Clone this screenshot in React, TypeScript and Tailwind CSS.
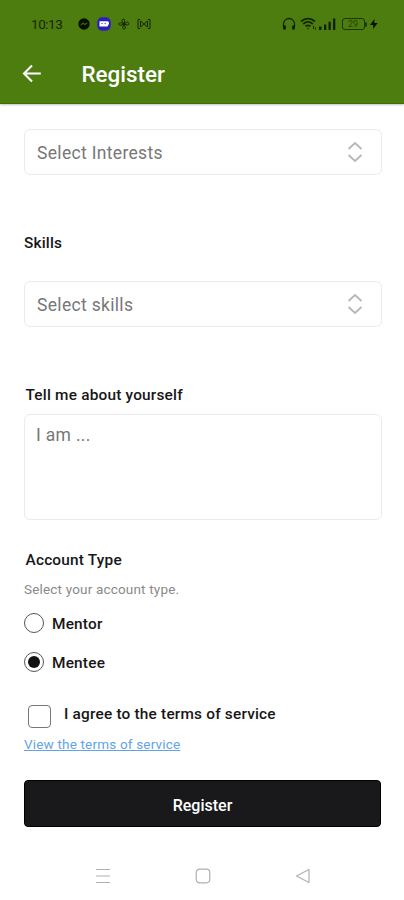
import React from "react";

const StatusBar = () => {
  return (
    <div className="flex h-12 items-center justify-between pl-[31px] pr-[26px] text-[#142800]">
      <div className="flex items-center">
        <span className="w-[47px] text-[13.500px] leading-4 tracking-[-0.450px]">10:13</span>
        <div className="flex items-center gap-[7px]">
          <svg width="12" height="12" viewBox="0 0 12 12">
            <circle cx="6" cy="6" r="5.7" fill="#071000" />
            <path d="M2.800 7.200 5 5l1.800 1.500L9.200 5" fill="none" stroke="#3c650a" strokeWidth="1.100" />
          </svg>
          <svg width="14" height="14" viewBox="0 0 14 14">
            <rect x="0.300" y="0.300" width="13.400" height="13.400" rx="5" fill="#2b1fc0" />
            <path d="M2.500 4.200H11l1 1v1.500l-1.500 2.800h-8z" fill="#fff" />
            <path d="M4.300 6.500h1.500M7.500 6.500H9" stroke="#2b1fc0" strokeWidth="0.700" />
          </svg>
          <svg width="12" height="12" viewBox="0 0 12 12" fill="none" stroke="currentColor" strokeWidth="1">
            <path d="M6 6 4 2.500C4.500 0 8.500.5 6 6l3.500-2C12 5 11.500 8.500 6 6l1.500 4C6 12.500 3 11 6 6l-4 1.500C-.500 6 1.500 3 6 6Z" />
          </svg>
          <svg width="14" height="12" viewBox="0 0 14 12" fill="none" stroke="currentColor" strokeWidth="1">
            <path d="M3 1.500H1v9h2M11 1.500h2v9h-2M3.500 3 10.500 9V3L3.500 9z" />
          </svg>
        </div>
      </div>
      <div className="flex items-center">
        <svg width="14" height="14" viewBox="0 0 14 14" fill="none" stroke="currentColor" strokeWidth="1.300">
          <path d="M1.500 10V7a5.500 5.500 0 0 1 11 0v3" />
          <path d="M2.500 8.500v4M11.500 8.500v4" stroke="#0a1700" strokeWidth="2.600" />
        </svg>
        <svg className="ml-[4px]" width="17" height="14" viewBox="0 0 17 14" fill="none" stroke="currentColor" strokeWidth="1.800">
          <path d="M1 4.500c4-3.800 10-3.800 14 0M3.200 7c3-2.600 6.700-2.600 9.600 0M5.500 9.400c1.500-1.300 3.500-1.300 5 0" />
          <path d="M8 12.500v-2M13.500 9v3M15.500 10.500v2" strokeWidth="1" />
        </svg>
        <svg className="ml-[2px]" width="17" height="12" viewBox="0 0 17 12" fill="#102200">
          <path d="M0 8.500h2.500V12H0zM5 6.500h2.300V12H5zM9.500 3.800h2.300V12H9.500zM14 .5h2.300V12H14z" />
        </svg>
        <div className="ml-[6px] flex h-[12px] w-[23px] items-center rounded-[3px] border border-[#1c3700] pl-[5px]">
          <span className="text-[9px] leading-none text-[#24450a]">29</span>
        </div>
        <div className="h-[5px] w-[2px] rounded-r-sm bg-[#1c3700]"></div>
        <svg className="ml-[3px]" width="8" height="10" viewBox="0 0 8 10" fill="#071000">
          <path d="M4.500 0 0 6h3.300L3 10l4.700-6H4.300z" />
        </svg>
      </div>
    </div>
  );
};

const SelectField = ({ placeholder }: { placeholder: string }) => {
  return (
    <div className="flex h-[46px] items-center justify-between rounded-[6px] border-[1.500px] border-[#ebebeb] pl-[12px] pr-[18px]">
      <span className="pt-[2px] text-[17.500px] leading-6 tracking-[0.320px] text-[#777]">{placeholder}</span>
      <svg width="16" height="22" viewBox="0 0 16 22" fill="none" stroke="#b7b7b7" strokeWidth="1.900">
        <path d="m1.500 8 6.500-6L14.500 8M1.500 14l6.500 6 6.500-6" />
      </svg>
    </div>
  );
};

const RadioOption = ({ label, checked = false }: { label: string; checked?: boolean }) => {
  return (
    <div className="flex h-[39px] items-center gap-2">
      <div className="flex size-5 items-center justify-center rounded-full border border-[#555]">
        {checked && <div className="size-3 rounded-full bg-[#111]"></div>}
      </div>
      <span className="mt-[5px] text-[15.400px] font-medium tracking-[0.200px]">{label}</span>
    </div>
  );
};

export default function App() {
  return (
    <div className="flex h-[900px] w-[404px] flex-col overflow-hidden bg-white font-['Roboto',sans-serif] text-[#171717]">
      <header className="h-[104px] shrink-0 border-b border-[#416d09] bg-[#4d7c0f] shadow-[0_1px_2px_rgba(0,0,0,0.25)]">
        <StatusBar />
        <div className="flex h-[52px] items-center pl-[22px]">
          <svg width="20" height="20" viewBox="0 0 20 20" fill="none" stroke="#fff" strokeWidth="2.100">
            <path d="M18.800 9.500H2M10 1.500l-8 8 8 8" />
          </svg>
          <h1 className="ml-[39.500px] text-[22.400px] font-medium leading-7 text-white">Register</h1>
        </div>
      </header>

      <main className="flex flex-col pl-6 pr-[22px] pt-[25px]">
        <SelectField placeholder="Select Interests" />

        <label className="mb-[28px] mt-[58px] text-[15.400px] font-medium leading-5 tracking-[0.200px]">Skills</label>
        <SelectField placeholder="Select skills" />

        <label className="mb-[9px] ml-[1.500px] mt-[58px] text-[15.400px] font-medium leading-5 tracking-[0.200px]">
          Tell me about yourself
        </label>
        <div className="h-[106px] rounded-[6px] border-[1.500px] border-[#ebebeb] pl-[11px] pt-[8px] text-[17.500px] leading-6 tracking-[0.320px] text-[#777]">
          I am ...
        </div>

        {/* Account type */}
        <h2 className="ml-[1.500px] mt-[30px] text-[15.400px] font-medium leading-5 tracking-[0.200px]">Account Type</h2>
        <p className="mb-[4px] mt-[9px] text-[13.500px] leading-5 tracking-[0.180px] text-[#8a8a8a]">Select your account type.</p>
        <RadioOption label="Mentor" />
        <RadioOption label="Mentee" checked />

        {/* Terms */}
        <div className="mt-[20px] flex h-7 items-center pl-[4px]">
          <div className="mt-[3px] size-[23px] rounded-[4px] border-[1.500px] border-[#777]"></div>
          <span className="ml-[13px] text-[15.400px] font-medium tracking-[0.200px]">I agree to the terms of service</span>
        </div>
        <a className="mt-[5px] text-[13.500px] leading-5 tracking-[0.180px] text-[#62a3e8] underline">View the terms of service</a>

        <button className="mr-px mt-[26px] h-[47px] rounded-[4px] border border-black bg-[#19191b] pt-[4px] text-[16px] font-medium text-white">
          Register
        </button>
      </main>

      {/* System navigation */}
      <nav className="mt-[41px] flex items-center justify-between pl-[95px] pr-[93px]">
        <svg width="16" height="16" viewBox="0 0 16 16" stroke="#b0b0b0" strokeWidth="1.200">
          <path d="M1 1.500h14M1 8h14M1 14.500h14" />
        </svg>
        <svg width="16" height="16" viewBox="0 0 16 16" fill="none" stroke="#b0b0b0" strokeWidth="1.200">
          <rect x="1.200" y="1.200" width="13.600" height="13.600" rx="3.500" />
        </svg>
        <svg width="16" height="16" viewBox="0 0 16 16" fill="none" stroke="#b0b0b0" strokeWidth="1.200" strokeLinejoin="round">
          <path d="M14 1.500v13L1.500 8z" />
        </svg>
      </nav>
    </div>
  );
}
